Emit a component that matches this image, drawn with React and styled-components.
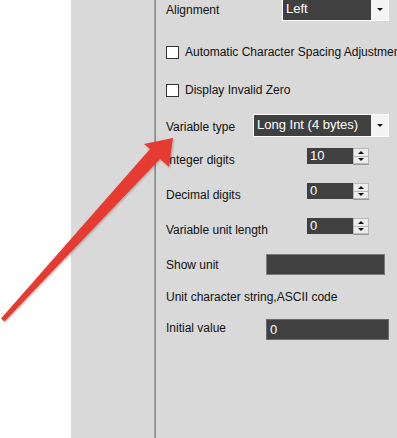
import React from "react";
import styled, { createGlobalStyle } from "styled-components";

const Global = createGlobalStyle`
  html, body { margin: 0; padding: 0; background: #ffffff; }
  body { font-family: "Liberation Sans", Arial, sans-serif; font-size: 12px; color: #111111; overflow: hidden; }
`;

const Page = styled.div`
  position: relative;
  display: flex;
  width: 397px;
  height: 438px;
  overflow: hidden;
`;

const WhiteCol = styled.div`
  width: 71px;
  flex: none;
  background: #ffffff;
`;

const SidePanel = styled.div`
  width: 83px;
  flex: none;
  background: #d9d9d9;
`;

const Divider = styled.div`
  width: 2px;
  flex: none;
  background: linear-gradient(to right, #a4a4a4 0 1px, #8c8c8c 1px 2px);
`;

const Props = styled.div`
  flex: 1;
  background: #d9d9d9;
  display: flex;
  flex-direction: column;
  padding-left: 10px;
  overflow: hidden;
`;

const Row = styled.div`
  display: flex;
  align-items: center;
  flex: none;
  height: ${(p) => p.$h}px;
  margin-top: ${(p) => p.$top}px;
  white-space: nowrap;
`;

const Label = styled.div`
  width: ${(p) => (p.$w ? `${p.$w}px` : "auto")};
  flex: none;
  line-height: 14px;
  position: relative;
  top: ${(p) => p.$dy || 0}px;
`;

const Select = styled.div`
  display: flex;
  width: ${(p) => p.$w}px;
  height: 23px;
  box-sizing: border-box;
  border: 1px solid #ffffff;
  background: #404040;
  flex: none;
`;

const SelectValue = styled.div`
  flex: 1;
  color: #ffffff;
  padding-left: 3px;
  font-size: 13px;
  line-height: 20px;
`;

const SelectArrow = styled.div`
  width: 17px;
  background: #f4f4f4;
  display: flex;
  align-items: center;
  justify-content: center;
  &::after {
    content: "";
    border-left: 3px solid transparent;
    border-right: 3px solid transparent;
    border-top: 3px solid #111;
  }
`;

const CheckBox = styled.span`
  width: 13px;
  height: 13px;
  box-sizing: border-box;
  border: 1px solid #333333;
  background: #ffffff;
  margin-right: 6px;
  flex: none;
`;

const Spinner = styled.div`
  display: flex;
  align-self: flex-start;
  flex: none;
`;

const SpinInput = styled.div`
  width: 46px;
  height: 16px;
  background: #404040;
  color: #ffffff;
  font-size: 13px;
  line-height: 15px;
  padding-left: 3px;
  box-sizing: border-box;
`;

const SpinButtons = styled.div`
  width: 16px;
  height: 17px;
  box-sizing: border-box;
  border-bottom: 1px solid #9a9a9a;
  background: #ececec;
  display: flex;
  flex-direction: column;
`;

const SpinBtn = styled.div`
  flex: 1;
  display: flex;
  align-items: center;
  justify-content: center;
  border: 1px solid #b8b8b8;
  border-top: ${(p) => (p.$down ? "none" : "1px solid #b8b8b8")};
  box-sizing: border-box;
  &::after {
    content: "";
    border-left: 3px solid transparent;
    border-right: 3px solid transparent;
    ${(p) => (p.$down ? "border-top: 3px solid #111;" : "border-bottom: 3px solid #111;")}
  }
`;

const TextBox = styled.div`
  width: ${(p) => p.$w}px;
  height: ${(p) => p.$h}px;
  box-sizing: border-box;
  border: 1px solid ${(p) => p.$border};
  background: #404040;
  color: #ffffff;
  font-size: 13px;
  padding-left: 3px;
  line-height: ${(p) => p.$h - 2}px;
  flex: none;
`;

const Overlay = styled.svg`
  position: absolute;
  left: 0;
  top: 0;
  pointer-events: none;
`;

const SpinField = ({ value }) => (
  <Spinner>
    <SpinInput>{value}</SpinInput>
    <SpinButtons>
      <SpinBtn />
      <SpinBtn $down />
    </SpinButtons>
  </Spinner>
);

export default function App() {
  return (
    <Page>
      <Global />
      <WhiteCol />
      <SidePanel />
      <Divider />
      <Props>
        <Row $h={23} $top={-2}>
          <Label $w={116}>Alignment</Label>
          <Select $w={107}>
            <SelectValue>Left</SelectValue>
            <SelectArrow />
          </Select>
        </Row>
        <Row $h={20} $top={21}>
          <CheckBox />
          <Label>Automatic Character Spacing Adjustment</Label>
        </Row>
        <Row $h={20} $top={18}>
          <CheckBox />
          <Label>Display Invalid Zero</Label>
        </Row>
        <Row $h={23} $top={14}>
          <Label $w={87} $dy={1}>Variable type</Label>
          <Select $w={136}>
            <SelectValue>Long Int (4 bytes)</SelectValue>
            <SelectArrow />
          </Select>
        </Row>
        <Row $h={24} $top={11}>
          <Label $w={141}>Integer digits</Label>
          <SpinField value="10" />
        </Row>
        <Row $h={24} $top={11}>
          <Label $w={141}>Decimal digits</Label>
          <SpinField value="0" />
        </Row>
        <Row $h={24} $top={11}>
          <Label $w={141}>Variable unit length</Label>
          <SpinField value="0" />
        </Row>
        <Row $h={22} $top={11}>
          <Label $w={100} $dy={1}>Show unit</Label>
          <TextBox $w={119} $h={21} $border="#7a7a7a" />
        </Row>
        <Row $h={20} $top={12}>
          <Label>Unit character string,ASCII code</Label>
        </Row>
        <Row $h={21} $top={12}>
          <Label $w={100} $dy={-2}>Initial value</Label>
          <TextBox $w={123} $h={21} $border="#6a6a6a">0</TextBox>
        </Row>
      </Props>
      <Overlay width="397" height="438" viewBox="0 0 397 438">
        <defs>
          <filter id="sh" x="-10%" y="-10%" width="120%" height="120%">
            <feDropShadow dx="1" dy="1" stdDeviation="1" floodColor="#000" floodOpacity="0.25" />
          </filter>
        </defs>
        <polygon
          points="173,138 169,167 160,159 4.5,321.5 1,318.5 150,149 144,144"
          fill="#e53b30"
          filter="url(#sh)"
        />
      </Overlay>
    </Page>
  );
}
